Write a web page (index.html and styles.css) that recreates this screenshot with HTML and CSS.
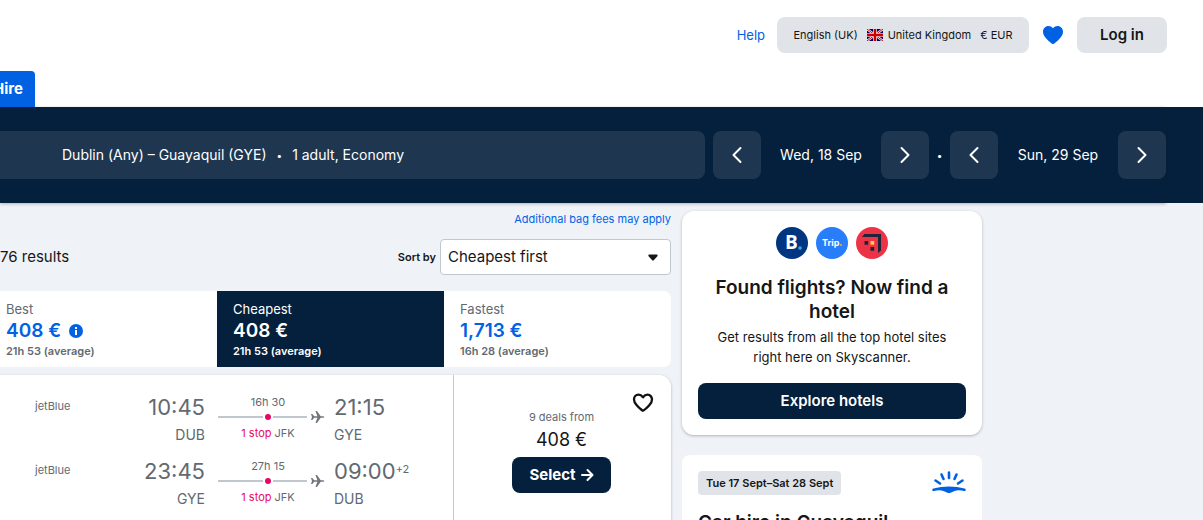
FILE: index.html
```html
<!DOCTYPE html>
<html lang="en-GB">
<head>
<meta charset="utf-8">
<meta name="viewport" content="width=device-width, initial-scale=1">
<title>Dublin to Guayaquil flights</title>
<link rel="stylesheet" href="styles.css">
</head>
<body>
<header class="site-header">
  <a class="help-link" href="#">Help</a>
  <button class="locale-button" type="button">
    <span>English (UK)</span>
    <span class="locale-country">
      <svg class="flag" viewBox="0 0 16 12" aria-hidden="true">
        <path fill="#006" d="M0 0h16v12H0z"/>
        <path stroke="#fff" stroke-width="2.2" d="M0 0l16 12M16 0L0 12"/>
        <path stroke="#c00" stroke-width="1" d="M0 0l16 12M16 0L0 12"/>
        <path stroke="#fff" stroke-width="3.600" d="M8 0v12M0 6h16"/>
        <path stroke="#c00" stroke-width="2.4" d="M8 0v12M0 6h16"/>
      </svg>
      <span>United Kingdom</span>
    </span>
    <span>€ EUR</span>
  </button>
  <a class="saved-link" href="#" aria-label="Saved">
    <svg viewBox="0 0 20 18" aria-hidden="true"><path fill="#0062e3" d="M10 2.2C8.600 .7 7.200 0 5.500 0 2.300 0 0 2.500 0 5.800c0 2.400 1.100 4.300 2.800 6.200 1.700 2 3.900 4.100 5.900 5.600.8.600 1.800.6 2.600 0 2-1.500 4.200-3.600 5.900-5.600C18.900 10.100 20 8.200 20 5.800 20 2.500 17.700 0 14.500 0c-1.700 0-3.100.7-4.500 2.200z"/></svg>
  </a>
  <button class="login-button" type="button">Log in</button>
</header>

<nav class="product-tabs"><a class="product-tab" href="#">Hire</a></nav>

<section class="search-bar">
  <div class="search-inner">
    <button class="search-summary" type="button"><span>Dublin (Any) – Guayaquil (GYE)</span><span class="summary-dot">•</span><span>1 adult, Economy</span></button>
    <div class="date-picker">
      <button class="date-step" type="button" aria-label="Earlier departure"><svg viewBox="0 0 24 24" aria-hidden="true"><path d="M15.500 5L8.500 12l7 7"/></svg></button>
      <span class="date-text">Wed, 18 Sep</span>
      <button class="date-step" type="button" aria-label="Later departure"><svg viewBox="0 0 24 24" aria-hidden="true"><path d="M8.500 5l7 7-7 7"/></svg></button>
    </div>
    <span class="date-dot">•</span>
    <div class="date-picker">
      <button class="date-step" type="button" aria-label="Earlier return"><svg viewBox="0 0 24 24" aria-hidden="true"><path d="M15.500 5L8.500 12l7 7"/></svg></button>
      <span class="date-text">Sun, 29 Sep</span>
      <button class="date-step" type="button" aria-label="Later return"><svg viewBox="0 0 24 24" aria-hidden="true"><path d="M8.500 5l7 7-7 7"/></svg></button>
    </div>
  </div>
</section>

<main class="content">
  <section class="results">
    <a class="bag-link" href="#">Additional bag fees may apply</a>
    <div class="results-toolbar">
      <span class="results-count">76 results</span>
      <div class="sort">
        <label class="sort-label" for="sort">Sort by</label>
        <div class="select-wrap">
          <select class="sort-select" id="sort"><option>Cheapest first</option></select>
          <svg class="caret" viewBox="0 0 10 7" aria-hidden="true"><path fill="#161616" d="M1.500 .5h7c1 0 1.500 1 .9 1.800L6 6c-.6.700-1.400.700-2 0L.600 2.300C0 1.500.500.500 1.500.500z"/></svg>
        </div>
      </div>
    </div>

    <div class="sort-tabs">
      <button class="sort-tab sort-tab-first" type="button">
        <span class="tab-name">Best</span>
        <span class="tab-price">408 € <svg class="info" viewBox="0 0 14 14" aria-hidden="true"><circle cx="7" cy="7" r="7" fill="#0062e3"/><path fill="#fff" d="M6 6h2v5H6zM6 3h2v2H6z"/></svg></span>
        <span class="tab-time">21h 53 (average)</span>
      </button>
      <button class="sort-tab sort-tab-active" type="button">
        <span class="tab-name">Cheapest</span>
        <span class="tab-price">408 €</span>
        <span class="tab-time">21h 53 (average)</span>
      </button>
      <button class="sort-tab" type="button">
        <span class="tab-name">Fastest</span>
        <span class="tab-price">1,713 €</span>
        <span class="tab-time">16h 28 (average)</span>
      </button>
    </div>

    <article class="ticket">
      <div class="legs">
        <div class="leg">
          <span class="airline">jetBlue</span>
          <div class="endpoint endpoint-from"><span class="time">10:45</span><span class="airport">DUB</span></div>
          <div class="route">
            <span class="duration">16h 30</span>
            <svg class="route-line" viewBox="0 0 108 14" aria-hidden="true"><path stroke="#c1c7cf" stroke-width="2" d="M1 7h45M56 7h34"/><circle cx="51" cy="7" r="3" fill="#e70866"/><path fill="#72747c" d="M94 4h1.300l1.900 2.200h3.200L98.500 1h1.500l3.700 5.200h2.300c1.700 0 1.700 1.600 0 1.600h-2.300L100 13h-1.500l1.900-5.200h-3.200L95.300 10H94l1-3z"/></svg>
            <span class="stops"><span class="stop-count">1 stop</span> JFK</span>
          </div>
          <div class="endpoint"><span class="time">21:15</span><span class="airport">GYE</span></div>
        </div>
        <div class="leg">
          <span class="airline">jetBlue</span>
          <div class="endpoint endpoint-from"><span class="time">23:45</span><span class="airport">GYE</span></div>
          <div class="route">
            <span class="duration">27h 15</span>
            <svg class="route-line" viewBox="0 0 108 14" aria-hidden="true"><path stroke="#c1c7cf" stroke-width="2" d="M1 7h45M56 7h34"/><circle cx="51" cy="7" r="3" fill="#e70866"/><path fill="#72747c" d="M94 4h1.300l1.900 2.200h3.200L98.500 1h1.500l3.700 5.200h2.300c1.700 0 1.700 1.600 0 1.600h-2.300L100 13h-1.500l1.900-5.200h-3.200L95.300 10H94l1-3z"/></svg>
            <span class="stops"><span class="stop-count">1 stop</span> JFK</span>
          </div>
          <div class="endpoint"><span class="time">09:00<sup class="day-offset">+2</sup></span><span class="airport">DUB</span></div>
        </div>
      </div>
      <div class="deal">
        <button class="save-button" type="button" aria-label="Save flight"><svg viewBox="0 0 22 20" aria-hidden="true"><path fill="none" stroke="#111" stroke-width="2.300" stroke-linejoin="round" d="M11 4.200C9.700 2.500 8.200 1.700 6.500 1.700 3.800 1.700 2 3.900 2 6.600c0 2 1 3.700 2.500 5.300 1.500 1.800 3.400 3.500 5.300 5.100.8.700 1.600.7 2.400 0 1.900-1.600 3.800-3.300 5.300-5.100C19 10.300 20 8.600 20 6.600c0-2.700-1.800-4.900-4.500-4.900-1.700 0-3.200.8-4.500 2.500z"/></svg></button>
        <span class="deal-count">9 deals from</span>
        <span class="deal-price">408 €</span>
        <button class="select-button" type="button">Select <svg viewBox="0 0 14 14" aria-hidden="true"><path fill="none" stroke="#fff" stroke-width="2" stroke-linecap="round" stroke-linejoin="round" d="M2 7h10.500M7.500 2l5 5-5 5"/></svg></button>
      </div>
    </article>
  </section>

  <aside class="sidebar">
    <section class="promo">
      <div class="partners">
        <svg viewBox="0 0 32 32" role="img" aria-label="Booking.com"><circle cx="16" cy="16" r="16" fill="#003580"/><text class="logo-b" x="9" y="22">B</text><circle cx="24" cy="21" r="1.800" fill="#2aa9f0"/></svg>
        <svg viewBox="0 0 32 32" role="img" aria-label="Trip.com"><circle cx="16" cy="16" r="16" fill="#287dfa"/><text class="logo-trip" x="6" y="19">Trip</text><circle cx="25" cy="18" r="1" fill="#ffb400"/></svg>
        <svg viewBox="0 0 32 32" role="img" aria-label="Hotels.com"><circle cx="16" cy="16" r="16" fill="#ef3346"/><path fill="#1e243a" d="M8.500 7H25v16.500L22 26V10H6zM8.500 14h3.700v3.700H8.500zM14.500 20h3.700v3.700h-3.700z"/><path fill="#fc4" d="M14.500 14h3.700v3.700h-3.700z"/></svg>
      </div>
      <h2 class="promo-title">Found flights? Now find a hotel</h2>
      <p class="promo-text">Get results from all the top hotel sites right here on Skyscanner.</p>
      <button class="promo-button" type="button">Explore hotels</button>
    </section>
    <section class="car-card">
      <div class="car-head">
        <span class="car-dates">Tue 17 Sept–Sat 28 Sept</span>
        <svg class="sun" viewBox="0 0 34 22" aria-hidden="true"><g fill="none" stroke="#0062e3" stroke-width="2.600" stroke-linecap="round"><path d="M17 1.500v5.500M9.500 3.500l2 4.500M24.500 3.500l-2 4.500M3.500 9.500l4.500 3M30.500 9.500l-4.500 3"/></g><path fill="#0062e3" d="M1.500 17.500C11 14.800 23 14.800 32.500 17.500c2 .7 1.500 2.800-.5 2.400-4-.9-7-.9-10 .3l-3.500 1.500c-1 .4-2 .4-3 0L12 20.200c-3-1.200-6-1.200-10-.3-2 .4-2.500-1.700-.5-2.400z"/></svg>
      </div>
      <h2 class="car-title">Car hire in Guayaquil</h2>
    </section>
  </aside>
</main>
</body>
</html>
```
FILE: styles.css
```css
* { box-sizing: border-box; }
body {
  margin: 0;
  height: 100vh;
  overflow: hidden;
  background: #eff3f8;
  color: #161616;
  font-family: Inter, "Liberation Sans", sans-serif;
  font-size: 15px;
  line-height: 20px;
}
button, select { font: inherit; color: inherit; border: 0; }
button { cursor: pointer; }
a { color: #0062e3; text-decoration: none; }
svg { display: block; flex: none; }

.site-header {
  display: flex;
  align-items: center;
  justify-content: flex-end;
  padding: 17px 36px 18px 0;
  background: #fff;
}
.help-link { margin-right: 12px; font-size: 13px; }
.locale-button {
  display: flex;
  align-items: center;
  justify-content: center;
  gap: 9px;
  width: 252px;
  height: 36px;
  padding: 0;
  border-radius: 8px;
  background: #e0e4e9;
  font-size: 11px;
}
.locale-country { display: flex; align-items: center; gap: 5px; }
.flag { width: 16px; height: 12px; }
.saved-link { margin: 0 14px; }
.saved-link svg { width: 20px; height: 18px; }
.login-button {
  width: 90px;
  height: 36px;
  padding: 0;
  border-radius: 8px;
  background: #e0e4e9;
  font-weight: 600;
}

.product-tabs { display: flex; background: #fff; }
.product-tab {
  display: flex;
  justify-content: flex-end;
  width: 35px;
  padding: 8px 12px 8px 0;
  overflow: hidden;
  border-radius: 0 4px 0 0;
  background: #0062e3;
  color: #fff;
  font-weight: 700;
}

.search-bar { padding-right: 37px; background: #05203c; color: #fff; }
.search-inner {
  display: flex;
  align-items: center;
  padding: 24px 0;
  box-shadow: 0 1px 3px rgba(37, 32, 31, 0.3);
}
.search-summary {
  display: flex;
  flex: 1;
  align-items: center;
  height: 48px;
  margin-right: 8px;
  padding: 0 0 0 62px;
  border-radius: 0 8px 8px 0;
  background: #1e364f;
  font-size: 14px;
}
.summary-dot { margin: 0 10px; font-size: 10px; }
.date-picker { display: flex; align-items: center; }
.date-step {
  display: flex;
  align-items: center;
  justify-content: center;
  width: 48px;
  height: 48px;
  padding: 0;
  border-radius: 8px;
  background: #1e364f;
}
.date-step svg { width: 24px; height: 24px; }
.date-step path { fill: none; stroke: #fff; stroke-width: 2; stroke-linecap: round; stroke-linejoin: round; }
.date-text { width: 120px; text-align: center; font-size: 14px; }
.date-dot { width: 21px; text-align: center; font-size: 10px; }

.content {
  display: grid;
  grid-template-columns: minmax(0, 1fr) 300px;
  gap: 11px;
  padding: 8px 221px 0 0;
}
.results { display: flex; flex-direction: column; }
.bag-link { align-self: flex-end; line-height: 16px; font-size: 11px; }
.results-toolbar {
  display: flex;
  align-items: center;
  justify-content: space-between;
  margin: 12px 0 16px;
}
.sort { display: flex; align-items: center; gap: 4px; }
.sort-label { font-size: 11px; font-weight: 600; }
.select-wrap { display: grid; align-items: center; width: 231px; }
.sort-select {
  grid-area: 1 / 1;
  width: 100%;
  height: 36px;
  padding: 0 32px 0 7px;
  border: 1px solid #c1c7cf;
  border-radius: 4px;
  background: #fff;
  appearance: none;
}
.caret { grid-area: 1 / 1; justify-self: end; width: 10px; height: 7px; margin-right: 13px; pointer-events: none; }

.sort-tabs {
  display: grid;
  grid-template-columns: minmax(0, 1fr) 227px 227px;
  overflow: hidden;
  border-radius: 0 8px 8px 0;
  background: #fff;
}
.sort-tab {
  display: flex;
  flex-direction: column;
  height: 76px;
  padding: 8px 16px;
  background: #fff;
  color: #626971;
  text-align: left;
}
.sort-tab-first { padding-left: 6px; }
.tab-name { font-size: 13px; }
.tab-price { display: flex; align-items: center; gap: 8px; line-height: 24px; color: #0062e3; font-size: 19px; font-weight: 600; }
.info { width: 14px; height: 14px; }
.tab-time { line-height: 16px; font-size: 11px; font-weight: 600; }
.sort-tab-active, .sort-tab-active .tab-price { background: #05203c; color: #fff; }

.ticket {
  display: grid;
  grid-template-columns: minmax(0, 1fr) 218px;
  margin-top: 8px;
  border-radius: 0 12px 12px 0;
  background: #fff;
  box-shadow: 0 1px 3px rgba(37, 32, 31, 0.3);
}
.legs { padding: 16px 0; color: #626971; }
.leg { display: flex; height: 64px; }
.airline { flex: 1; padding: 5px 0 0 35px; font-size: 11px; }
.endpoint { display: flex; flex-direction: column; width: 119px; }
.endpoint-from { width: 80px; align-items: flex-end; }
.time { display: flex; line-height: 32px; font-size: 22px; }
.day-offset { line-height: 28px; font-size: 11px; }
.airport { line-height: 24px; font-size: 14px; }
.route { display: flex; flex-direction: column; width: 108px; margin: 0 9px 0 12px; font-size: 11px; }
.duration, .stops { width: 102px; line-height: 16px; text-align: center; }
.duration { padding-top: 3px; }
.stops { padding-top: 1px; }
.stop-count { color: #e70866; }
.route-line { width: 108px; height: 14px; }
.deal {
  display: flex;
  position: relative;
  flex-direction: column;
  align-items: center;
  padding: 34px 2px 34px 0;
  border-left: 1px solid #c1c7cf;
}
.save-button { position: absolute; top: 18px; right: 17px; padding: 0; background: none; }
.save-button svg { width: 22px; height: 20px; }
.deal-count { line-height: 16px; color: #626971; font-size: 11px; }
.deal-price { line-height: 30px; font-size: 18px; }
.select-button {
  display: flex;
  align-items: center;
  justify-content: center;
  gap: 4px;
  width: 99px;
  height: 36px;
  margin-top: 2px;
  padding: 0;
  border-radius: 8px;
  background: #05203c;
  color: #fff;
  font-weight: 700;
}
.select-button svg { width: 14px; height: 14px; }

.sidebar { display: flex; flex-direction: column; gap: 20px; }
.promo {
  padding: 16px;
  border-radius: 12px;
  background: #fff;
  box-shadow: 0 1px 3px rgba(37, 32, 31, 0.3);
  text-align: center;
}
.partners { display: flex; justify-content: center; gap: 8px; }
.partners svg { width: 32px; height: 32px; }
.logo-b { fill: #fff; font-family: "Open Sans", sans-serif; font-size: 19px; font-weight: 700; }
.logo-trip { fill: #fff; font-size: 9px; font-weight: 700; }
.promo-title { margin: 17px 0 3px; line-height: 24px; font-size: 19px; font-weight: 600; }
.promo-text { margin: 0 0 16px; padding: 0 12px; font-size: 13px; }
.promo-button {
  width: 100%;
  height: 36px;
  border-radius: 8px;
  background: #05203c;
  color: #fff;
  font-weight: 600;
}
.car-card { padding: 16px; border-radius: 8px; background: #fff; }
.car-head { display: flex; align-items: flex-start; justify-content: space-between; }
.car-dates { padding: 2px 8px; border-radius: 4px; background: #e0e4e9; font-size: 11px; font-weight: 600; }
.sun { width: 34px; height: 22px; }
.car-title { margin: 16px 0 0; line-height: 24px; font-size: 19px; font-weight: 600; }
```
